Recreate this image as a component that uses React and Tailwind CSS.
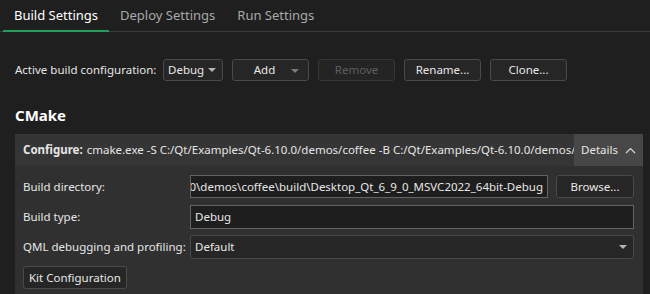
import React from 'react';

const font = { fontFamily: '"Noto Sans", "Liberation Sans", sans-serif' };

const Caret = ({ dim }) => (
    <svg width="8" height="4" viewBox="0 0 8 4" className="shrink-0">
        <path d="M0 0 L8 0 L4 4 Z" fill={dim ? '#7a7a7a' : '#b4b4b4'} />
    </svg>
);

const Btn = ({ children, disabled, className = '' }) => (
    <div
        className={`shrink-0 h-[22px] flex items-center justify-center rounded-[3px] border text-[11.5px] whitespace-nowrap ${
            disabled ? 'border-[#363636] bg-[#242424] text-[#5e5e5e]' : 'border-[#4a4a4a] bg-[#262626] text-[#e8e8e8]'
        } ${className}`}
    >
        {children}
    </div>
);

const Tab = ({ label, active }) => (
    <div className={`h-[32px] px-[11px] flex items-center text-[13px] relative ${active ? 'text-white' : 'text-[#a8a8a8]'}`}>
        {label}
        {active && <div className="absolute left-0 right-0 bottom-0 h-[2px] bg-[#21a05a]" />}
    </div>
);

export default function App() {
    return (
        <div className="w-[650px] h-[294px] bg-[#1f1f1f] overflow-hidden text-[#e6e6e6]" style={font}>
            <div className="flex pl-[3px] border-b border-[#3b3b3b] h-[32px]">
                <Tab label="Build Settings" active />
                <Tab label="Deploy Settings" />
                <Tab label="Run Settings" />
            </div>

            <div className="flex items-center pl-[15px] mt-[27px] h-[22px]">
                <span className="text-[11.5px] w-[148px] shrink-0 whitespace-nowrap">Active build configuration:</span>
                <div className="shrink-0 w-[60px] h-[22px] flex items-center justify-between pl-[4px] pr-[6px] rounded-[3px] border border-[#4a4a4a] bg-[#262626] text-[11.5px]">
                    Debug <Caret />
                </div>
                <Btn className="ml-[9px] w-[77px] relative pr-[12px]">
                    Add
                    <span className="absolute right-[9px] top-[9px] flex"><Caret dim /></span>
                </Btn>
                <Btn disabled className="ml-[9px] w-[77px]">Remove</Btn>
                <Btn className="ml-[9px] w-[77px]">Rename...</Btn>
                <Btn className="ml-[9px] w-[77px]">Clone...</Btn>
            </div>

            <div className="pl-[15px] mt-[24px] text-[15px] font-bold text-white leading-[20px]">CMake</div>

            <div className="ml-[15px] mr-[7px] mt-[9px] bg-[#303030]">
                <div className="flex h-[32px] bg-[#353535]">
                    <div className="flex-1 min-w-0 overflow-hidden whitespace-nowrap flex items-center pl-[8px] text-[11.5px]">
                        <span className="font-bold mr-[4px]">Configure:</span>
                        <span>cmake.exe -S C:/Qt/Examples/Qt-6.10.0/demos/coffee -B C:/Qt/Examples/Qt-6.10.0/demos/coffee/build</span>
                    </div>
                    <div className="shrink-0 w-[69px] bg-[#474747] flex items-center justify-center gap-[7px] text-[11.5px]">
                        Details
                        <svg width="11" height="7" viewBox="0 0 11 7">
                            <path d="M1 6 L5.5 1.5 L10 6" stroke="#d8d8d8" strokeWidth="1.2" fill="none" />
                        </svg>
                    </div>
                </div>

                <div className="pl-[8px] pr-[9px] pt-[9px] pb-[8px] flex flex-col">
                    <div className="flex items-center h-[23px]">
                        <span className="w-[167px] shrink-0 text-[11.5px] whitespace-nowrap">Build directory:</span>
                        <div className="w-[358px] shrink-0 h-[23px] border border-[#636363] bg-[#1e1e1e] flex items-center justify-end pr-[4px] overflow-hidden whitespace-nowrap text-[11.5px]">
                            C:\Qt\Examples\Qt-6.10.0\demos\coffee\build\Desktop_Qt_6_9_0_MSVC2022_64bit-Debug
                        </div>
                        <Btn className="ml-[8px] flex-1 h-[23px]">Browse...</Btn>
                    </div>
                    <div className="flex items-center h-[24px] mt-[7px]">
                        <span className="w-[167px] shrink-0 text-[11.5px] whitespace-nowrap">Build type:</span>
                        <div className="flex-1 h-[24px] border border-[#636363] bg-[#1e1e1e] flex items-center pl-[4px] text-[11.5px]">
                            Debug
                        </div>
                    </div>
                    <div className="flex items-center h-[24px] mt-[6px]">
                        <span className="w-[167px] shrink-0 text-[11.5px] whitespace-nowrap">QML debugging and profiling:</span>
                        <div className="flex-1 h-[24px] rounded-[3px] border border-[#4a4a4a] bg-[#262626] flex items-center justify-between pl-[4px] pr-[6px] text-[11.5px]">
                            Default <Caret />
                        </div>
                    </div>
                    <div className="flex mt-[7px]">
                        <Btn className="px-[5px] h-[23px]">Kit Configuration</Btn>
                    </div>
                </div>
            </div>
        </div>
    );
}
